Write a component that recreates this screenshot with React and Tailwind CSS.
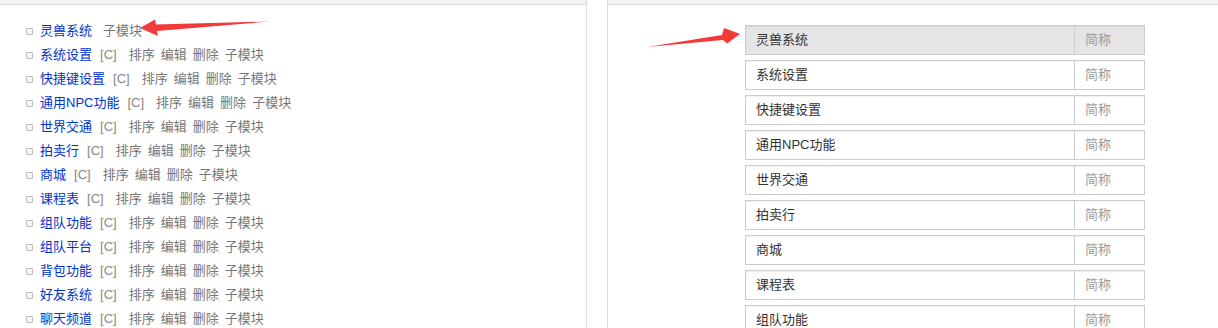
import React from 'react';

const modules = [
  '灵兽系统', '系统设置', '快捷键设置', '通用NPC功能', '世界交通', '拍卖行', '商城',
  '课程表', '组队功能', '组队平台', '背包功能', '好友系统', '聊天频道',
];

const font = { fontFamily: '"Liberation Sans", "Noto Sans CJK SC", sans-serif' };

const ModuleRow = ({ name, first }) => (
  <li className="h-[24px] flex items-center text-[13px] leading-[24px]">
    <span className="w-[7px] h-[7px] border border-[#bdbdbd] bg-[#f6f6f6] rounded-[1px] mr-[7px]" />
    <a className="text-[#0033cc]">{name}</a>
    {first ? (
      <span className="ml-[11px] text-[#777]">子模块</span>
    ) : (
      <>
        <span className="ml-[8px] text-[#888]">[C]</span>
        <span className="ml-[12px] text-[#777]">排序</span>
        <span className="ml-[6px] text-[#777]">编辑</span>
        <span className="ml-[6px] text-[#777]">删除</span>
        <span className="ml-[6px] text-[#777]">子模块</span>
      </>
    )}
  </li>
);

const InputRow = ({ name, active }) => (
  <div
    className={`flex shrink-0 h-[30px] w-[400px] mb-[5px] border border-[#ccc] shadow-[inset_0_1px_1px_rgba(0,0,0,0.06)] text-[13px] ${
      active ? 'bg-[#e5e5e5]' : 'bg-white'
    }`}
  >
    <div className="flex-1 flex items-center pl-[10px] text-[#333]">{name}</div>
    <div className="w-[70px] border-l border-[#ccc] flex items-center pl-[10px] text-[#999]">简称</div>
  </div>
);

export default function App() {
  return (
    <div className="relative flex w-[1218px] h-[328px] overflow-hidden bg-white" style={font}>
      <div className="w-[587px] border-r border-[#ddd] flex flex-col">
        <div className="h-[5px] shrink-0 bg-[#f2f2f2] border-b border-[#ddd]" />
        <ul className="pt-[14px] pl-[26px] shrink-0">
          {modules.map((m, i) => (
            <ModuleRow key={m} name={m} first={i === 0} />
          ))}
        </ul>
      </div>
      <div className="w-[20px]" />
      <div className="flex-1 border-l border-[#ddd] flex flex-col">
        <div className="h-[5px] shrink-0 bg-[#f2f2f2] border-b border-[#ddd]" />
        <div className="pt-[20px] pl-[137px] shrink-0">
          {modules.slice(0, 9).map((m, i) => (
            <InputRow key={m} name={m} active={i === 0} />
          ))}
        </div>
      </div>

      <svg className="absolute inset-0 pointer-events-none" width="1218" height="328">
        <polygon
          points="140,28 155,19.5 156,24.5 270,21.5 157,31 158,36"
          fill="#f23a3a"
        />
        <polygon
          points="740,34 724,28 722,35 647,47 723,40 727,43.5"
          fill="#f23a3a"
        />
      </svg>
    </div>
  );
}
